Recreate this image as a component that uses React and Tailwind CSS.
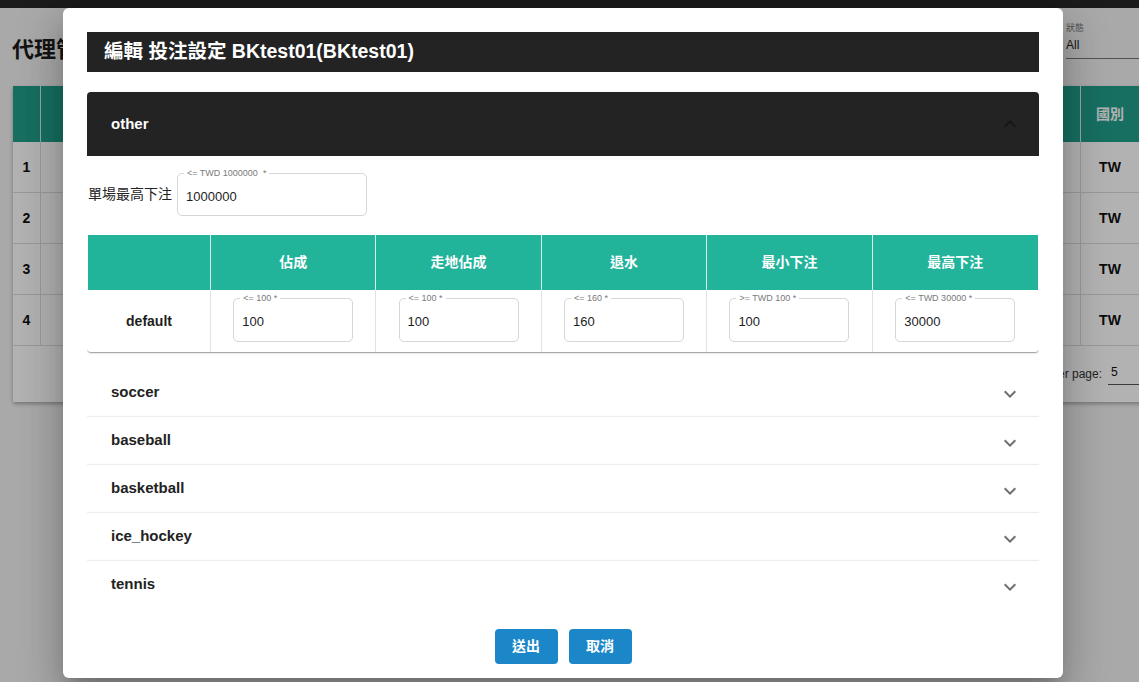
import React from "react";

const FONT = "font-['Helvetica_Neue','Liberation_Sans','Noto_Sans_CJK_TC',sans-serif]";

function ExpandMore({ className = "" }) {
  return (
    <svg viewBox="0 0 24 24" width="24" height="24" className={className} fill="currentColor">
      <path d="M16.59 8.59 12 13.17 7.41 8.59 6 10l6 6 6-6z" />
    </svg>
  );
}

function ExpandLess({ className = "" }) {
  return (
    <svg viewBox="0 0 24 24" width="24" height="24" className={className} fill="currentColor">
      <path d="m12 8-6 6 1.41 1.41L12 10.83l4.59 4.58L18 14z" />
    </svg>
  );
}

function OutlinedInput({ legend, value, className = "" }) {
  return (
    <div className={`relative rounded-[5px] border border-[#d6d6d6] bg-white ${className}`}>
      <span className="absolute -top-[6px] left-[6px] bg-white px-[3px] text-[9px] leading-[10px] text-[#7a7a7a] whitespace-pre">
        {legend}
      </span>
      <div className="flex h-full items-center pl-[8px] pt-[4px] text-[13px] text-[#1e1e1e]">{value}</div>
    </div>
  );
}

const headers = ["佔成", "走地佔成", "退水", "最小下注", "最高下注"];
const cells = [
  { legend: "<= 100 *", value: "100" },
  { legend: "<= 100 *", value: "100" },
  { legend: "<= 160 *", value: "160" },
  { legend: ">= TWD 100 *", value: "100" },
  { legend: "<= TWD 30000 *", value: "30000" },
];
const sports = ["soccer", "baseball", "basketball", "ice_hockey", "tennis"];

function BackgroundPage() {
  const rows = ["1", "2", "3", "4"];
  return (
    <div className="flex h-full flex-col bg-[#f3f3f3]">
      <div className="h-[8px] bg-[#272727]" />
      <div className="flex h-[78px]">
        <div className="border-l-[3px] border-transparent pl-[9px] pt-[28px] text-[22px] font-bold leading-[28px] text-[#1c1c1c]">
          代理管理
        </div>
        <div className="ml-auto w-[73px] pt-[14px]">
          <div className="text-[9px] leading-[12px] text-[#777]">狀態</div>
          <div className="mt-[2px] border-b border-[#777] pb-[4px] text-[12px] leading-[18px] text-[#222]">All</div>
        </div>
      </div>
      <div className="ml-[13px] w-[1140px] bg-white shadow-[0_2px_4px_rgba(0,0,0,0.3)]">
        <div className="flex h-[56px] bg-[#22a08c] text-[14px] font-bold text-white">
          <div className="w-[28px] border-r border-[#d8efeb]" />
          <div className="w-[1040px] border-r border-[#d8efeb]" />
          <div className="flex w-[58px] items-center justify-center">國別</div>
        </div>
        {rows.map((r) => (
          <div key={r} className="flex h-[51px] border-b border-[#dcdcdc] text-[14px] font-bold text-[#111]">
            <div className="flex w-[28px] items-center justify-center border-r border-[#dcdcdc]">{r}</div>
            <div className="w-[1040px] border-r border-[#dcdcdc]" />
            <div className="flex w-[58px] items-center justify-center">TW</div>
          </div>
        ))}
        <div className="flex h-[56px] items-center justify-end">
          <div className="whitespace-nowrap text-[12px] text-[#333]">Rows per page:</div>
          <div className="ml-[6px] w-[45px] border-b border-[#555] pb-[3px] pl-[3px] text-[12px] text-[#111]">5</div>
        </div>
      </div>
    </div>
  );
}

export default function App() {
  return (
    <div className={`relative h-[682px] w-[1139px] overflow-hidden ${FONT}`}>
      <BackgroundPage />
      <div className="absolute inset-0 bg-black/[0.3]" />
      <div className="absolute left-[63px] top-[8px] flex h-[670px] w-[1000px] flex-col rounded-[6px] bg-white px-[24px] pt-[24px] shadow-[0_11px_15px_-7px_rgba(0,0,0,0.2),0_24px_38px_3px_rgba(0,0,0,0.14),0_9px_46px_8px_rgba(0,0,0,0.12)]">
        <div className="flex h-[40px] items-center bg-[#232323] pl-[17px] text-[19.5px] font-bold text-white">
          編輯 投注設定 BKtest01(BKtest01)
        </div>
        <div className="h-[532px] overflow-hidden pt-[20px]">
          {/* other - expanded */}
          <div className="rounded-[4px] bg-white shadow-[0_2px_1px_-1px_rgba(0,0,0,0.2),0_1px_1px_0_rgba(0,0,0,0.14),0_1px_3px_0_rgba(0,0,0,0.12)]">
            <div className="flex h-[64px] items-center rounded-t-[4px] bg-[#232323] pl-[24px] pr-[17px]">
              <span className="text-[15px] font-bold text-white">other</span>
              <ExpandLess className="ml-auto text-[#161616]" />
            </div>
            <div className="flex items-center pb-[19px] pl-[1px] pt-[17px]">
              <span className="text-[14px] text-[#222]">單場最高下注</span>
              <OutlinedInput legend="<= TWD 1000000  *" value="1000000" className="ml-[5px] h-[43px] w-[190px]" />
            </div>
            <div className="mx-[1px] grid grid-cols-[123px_repeat(5,1fr)]">
              <div className="h-[55px] border-r border-[#d9f1ed] bg-[#22b39b]" />
              {headers.map((h, i) => (
                <div
                  key={h}
                  className={`flex h-[55px] items-center justify-center bg-[#22b39b] text-[14px] font-bold text-white ${
                    i < 4 ? "border-r border-[#d9f1ed]" : ""
                  }`}
                >
                  {h}
                </div>
              ))}
              <div className="flex h-[62px] items-center justify-center border-r border-[#e2e2e2] text-[14px] font-bold text-[#1e1e1e]">
                default
              </div>
              {cells.map((c, i) => (
                <div
                  key={i}
                  className={`flex h-[62px] items-center justify-center pb-[2px] ${i < 4 ? "border-r border-[#e2e2e2]" : ""}`}
                >
                  <OutlinedInput legend={c.legend} value={c.value} className="h-[44px] w-[120px]" />
                </div>
              ))}
            </div>
          </div>
          {/* collapsed sports */}
          <div className="mt-[16px] flex flex-col">
            {sports.map((s, i) => (
              <div
                key={s}
                className={`flex h-[48px] shrink-0 items-center bg-white pl-[24px] pr-[17px] shadow-[0_2px_1px_-1px_rgba(0,0,0,0.12),0_1px_1px_0_rgba(0,0,0,0.08),0_1px_3px_0_rgba(0,0,0,0.08)] ${
                  i === 0 ? "rounded-t-[4px]" : "border-t border-[#ededed]"
                }`}
              >
                <span className="text-[15px] font-bold text-[#222]">{s}</span>
                <ExpandMore className="ml-auto mt-[4px] text-[#6f6f6f]" />
              </div>
            ))}
          </div>
        </div>
        <div className="flex justify-center gap-[11px] pt-[25px]">
          <button className="h-[35px] w-[63px] rounded-[4px] bg-[#1b87c8] text-[14px] font-bold text-white">送出</button>
          <button className="h-[35px] w-[63px] rounded-[4px] bg-[#1b87c8] text-[14px] font-bold text-white">取消</button>
        </div>
      </div>
    </div>
  );
}
